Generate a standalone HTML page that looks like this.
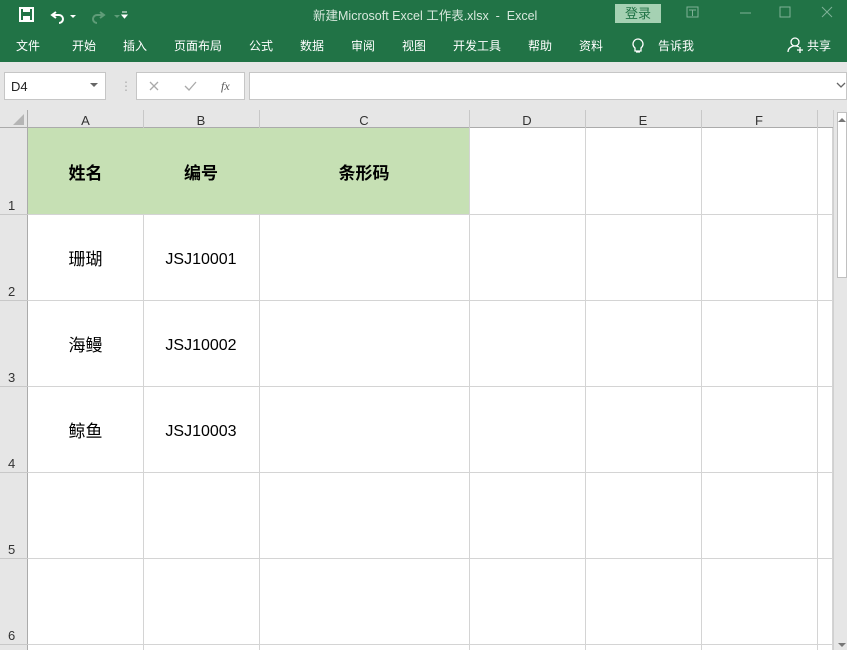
<!DOCTYPE html>
<html><head><meta charset="utf-8"><style>
*{margin:0;padding:0;box-sizing:border-box}
body{width:847px;height:650px;overflow:hidden;background:#fff;font-family:"Liberation Sans","Noto Sans CJK SC",sans-serif;position:relative}
.a{position:absolute}
.t{color:#fff;font-size:12px;white-space:nowrap}
.hd{font-size:13px;color:#333;text-align:center}
.vl{position:absolute;top:128px;width:1px;height:522px;background:#d4d4d4}
.hl{position:absolute;left:28px;width:805px;height:1px;background:#d4d4d4}
.rn{position:absolute;left:0;width:28px;font-size:13px;color:#333;text-align:left;padding-left:8px}
.c{position:absolute;text-align:center;font-size:17px;color:#000}
</style></head><body>
<div class="a" style="left:0;top:0;width:847px;height:62px;background:#217346"></div>
<svg class="a" style="left:18px;top:6px" width="120" height="18">
<rect x="2" y="2" width="13" height="13" fill="none" stroke="#fff" stroke-width="2"/><rect x="5" y="2" width="7" height="4" fill="#fff"/><rect x="5" y="10" width="7" height="5" fill="#fff"/>
<path d="M38 6 l-4 3 4 3 M34 9 h7 a4 4 0 0 1 0 8" fill="none" stroke="#fff" stroke-width="2"/>
<path d="M52 9 l3 3 3-3z" fill="#fff"/>
<path d="M82 6 l4 3 -4 3 M86 9 h-7 a4 4 0 0 0 0 8" fill="none" stroke="#5f9c78" stroke-width="2"/>
<path d="M96 9 l3 3 3-3z" fill="#5f9c78"/>
<path d="M104 6 h5 M104 9 l2.5 3 2.5-3z" stroke="#fff" fill="#fff"/>
</svg>
<div class="a t" style="left:313px;top:5px;font-size:12.5px;color:#d8e8dd">新建Microsoft Excel 工作表.xlsx&nbsp; - &nbsp;Excel</div>
<div class="a" style="left:615px;top:4px;width:46px;height:19px;background:#a5d1b3;color:#217346;font-size:13px;text-align:center;line-height:19px">登录</div>
<svg class="a" style="left:680px;top:4px" width="167" height="20">
<rect x="7" y="3" width="11" height="10" fill="none" stroke="#7fb197"/><path d="M9 6h7M12.5 6v6" stroke="#7fb197"/>
<path d="M60 9h11" stroke="#7fb197"/>
<rect x="100" y="3" width="10" height="10" fill="none" stroke="#7fb197"/>
<path d="M142 3l10 10M152 3l-10 10" stroke="#7fb197"/>
</svg>
<div class="a t" style="left:16px;top:37px">文件</div>
<div class="a t" style="left:72px;top:37px">开始</div>
<div class="a t" style="left:123px;top:37px">插入</div>
<div class="a t" style="left:174px;top:37px">页面布局</div>
<div class="a t" style="left:249px;top:37px">公式</div>
<div class="a t" style="left:300px;top:37px">数据</div>
<div class="a t" style="left:351px;top:37px">审阅</div>
<div class="a t" style="left:402px;top:37px">视图</div>
<div class="a t" style="left:453px;top:37px">开发工具</div>
<div class="a t" style="left:528px;top:37px">帮助</div>
<div class="a t" style="left:579px;top:37px">资料</div>
<svg class="a" style="left:630px;top:36px" width="16" height="18"><path d="M5 12 a5 5 0 1 1 6 0 v3 h-6z M6 16h4" fill="none" stroke="#fff" stroke-width="1.3"/></svg>
<div class="a t" style="left:658px;top:37px">告诉我</div>
<svg class="a" style="left:787px;top:36px" width="18" height="18"><circle cx="8" cy="6" r="4" fill="none" stroke="#fff" stroke-width="1.3"/><path d="M1 16 a7 6 0 0 1 11-5 M13 11v6M10 14h6" fill="none" stroke="#fff" stroke-width="1.3"/></svg>
<div class="a t" style="left:807px;top:37px">共享</div>
<div class="a" style="left:0;top:62px;width:847px;height:66px;background:#e6e6e6"></div>
<div class="a" style="left:4px;top:72px;width:102px;height:28px;background:#fff;border:1px solid #c6c6c6;font-size:13px;color:#222;padding:6px 0 0 6px">D4</div>
<svg class="a" style="left:90px;top:83px" width="9" height="6"><path d="M0 0h8l-4 4z" fill="#666"/></svg>
<div class="a" style="left:120px;top:79px;color:#aaa;font-size:12px">⋮</div>
<div class="a" style="left:136px;top:72px;width:109px;height:28px;background:#fff;border:1px solid #c6c6c6"></div>
<svg class="a" style="left:146px;top:78px" width="95" height="16"><path d="M4 4l8 8M12 4l-8 8" stroke="#aaa" stroke-width="1.3"/><path d="M39 8l4 4 7-8" stroke="#aaa" stroke-width="1.3" fill="none"/><text x="75" y="12" font-family="Liberation Serif" font-style="italic" font-size="12" fill="#555">fx</text></svg>
<div class="a" style="left:249px;top:72px;width:598px;height:28px;background:#fff;border:1px solid #c6c6c6"></div>
<svg class="a" style="left:836px;top:82px" width="10" height="8"><path d="M1 1l4 4 4-4" stroke="#666" fill="none" stroke-width="1.3"/></svg>
<div class="a" style="left:0;top:110px;width:833px;height:18px;background:#e6e6e6;border-bottom:1px solid #ababab"></div>
<svg class="a" style="left:12px;top:114px" width="14" height="12"><path d="M12 0v11H1z" fill="#b5b5b5"/></svg>
<div class="a" style="left:27px;top:110px;width:1px;height:18px;background:#ababab"></div>
<div class="a hd" style="left:28px;top:113px;width:115px">A</div>
<div class="a hd" style="left:143px;top:113px;width:116px">B</div>
<div class="a hd" style="left:259px;top:113px;width:210px">C</div>
<div class="a hd" style="left:469px;top:113px;width:116px">D</div>
<div class="a hd" style="left:585px;top:113px;width:116px">E</div>
<div class="a hd" style="left:701px;top:113px;width:116px">F</div>
<div class="a" style="left:143px;top:110px;width:1px;height:18px;background:#c8c8c8"></div>
<div class="a" style="left:259px;top:110px;width:1px;height:18px;background:#c8c8c8"></div>
<div class="a" style="left:469px;top:110px;width:1px;height:18px;background:#c8c8c8"></div>
<div class="a" style="left:585px;top:110px;width:1px;height:18px;background:#c8c8c8"></div>
<div class="a" style="left:701px;top:110px;width:1px;height:18px;background:#c8c8c8"></div>
<div class="a" style="left:817px;top:110px;width:1px;height:18px;background:#c8c8c8"></div>
<div class="a" style="left:0;top:128px;width:28px;height:522px;background:#e6e6e6;border-right:1px solid #ababab"></div>
<div class="rn" style="top:198px">1</div><div class="rn" style="top:284px">2</div><div class="rn" style="top:370px">3</div>
<div class="rn" style="top:456px">4</div><div class="rn" style="top:542px">5</div><div class="rn" style="top:628px">6</div>
<div class="a" style="left:0;top:214px;width:28px;height:1px;background:#c8c8c8"></div>
<div class="a" style="left:0;top:300px;width:28px;height:1px;background:#c8c8c8"></div>
<div class="a" style="left:0;top:386px;width:28px;height:1px;background:#c8c8c8"></div>
<div class="a" style="left:0;top:472px;width:28px;height:1px;background:#c8c8c8"></div>
<div class="a" style="left:0;top:558px;width:28px;height:1px;background:#c8c8c8"></div>
<div class="a" style="left:0;top:644px;width:28px;height:1px;background:#c8c8c8"></div>
<div class="a" style="left:28px;top:128px;width:441px;height:86px;background:#c6e0b4"></div>
<div class="vl" style="left:143px;top:214px;height:436px"></div>
<div class="vl" style="left:259px;top:214px;height:436px"></div>
<div class="vl" style="left:469px"></div><div class="vl" style="left:585px"></div><div class="vl" style="left:701px"></div><div class="vl" style="left:817px"></div><div class="vl" style="left:832px"></div>
<div class="hl" style="top:214px"></div><div class="hl" style="top:300px"></div><div class="hl" style="top:386px"></div>
<div class="hl" style="top:472px"></div><div class="hl" style="top:558px"></div><div class="hl" style="top:644px"></div>
<div class="c" style="left:28px;top:159px;width:115px;font-weight:bold">姓名</div>
<div class="c" style="left:143px;top:159px;width:116px;font-weight:bold">编号</div>
<div class="c" style="left:259px;top:159px;width:210px;font-weight:bold">条形码</div>
<div class="c" style="left:28px;top:245px;width:115px">珊瑚</div>
<div class="c" style="left:143px;top:251px;width:116px;font-size:16px">JSJ10001</div>
<div class="c" style="left:28px;top:331px;width:115px">海鳗</div>
<div class="c" style="left:143px;top:337px;width:116px;font-size:16px">JSJ10002</div>
<div class="c" style="left:28px;top:417px;width:115px">鲸鱼</div>
<div class="c" style="left:143px;top:423px;width:116px;font-size:16px">JSJ10003</div>
<div class="a" style="left:833px;top:110px;width:14px;height:540px;background:#e6e6e6;border-left:1px solid #d0d0d0"></div>
<div class="a" style="left:837px;top:112px;width:10px;height:166px;background:#fff;border:1px solid #c0c0c0"></div>
<svg class="a" style="left:837px;top:116px" width="10" height="8"><path d="M1 6l4-4 4 4z" fill="#777"/></svg>
<svg class="a" style="left:837px;top:642px" width="10" height="8"><path d="M1 1l4 4 4-4z" fill="#777"/></svg>
</body></html>
